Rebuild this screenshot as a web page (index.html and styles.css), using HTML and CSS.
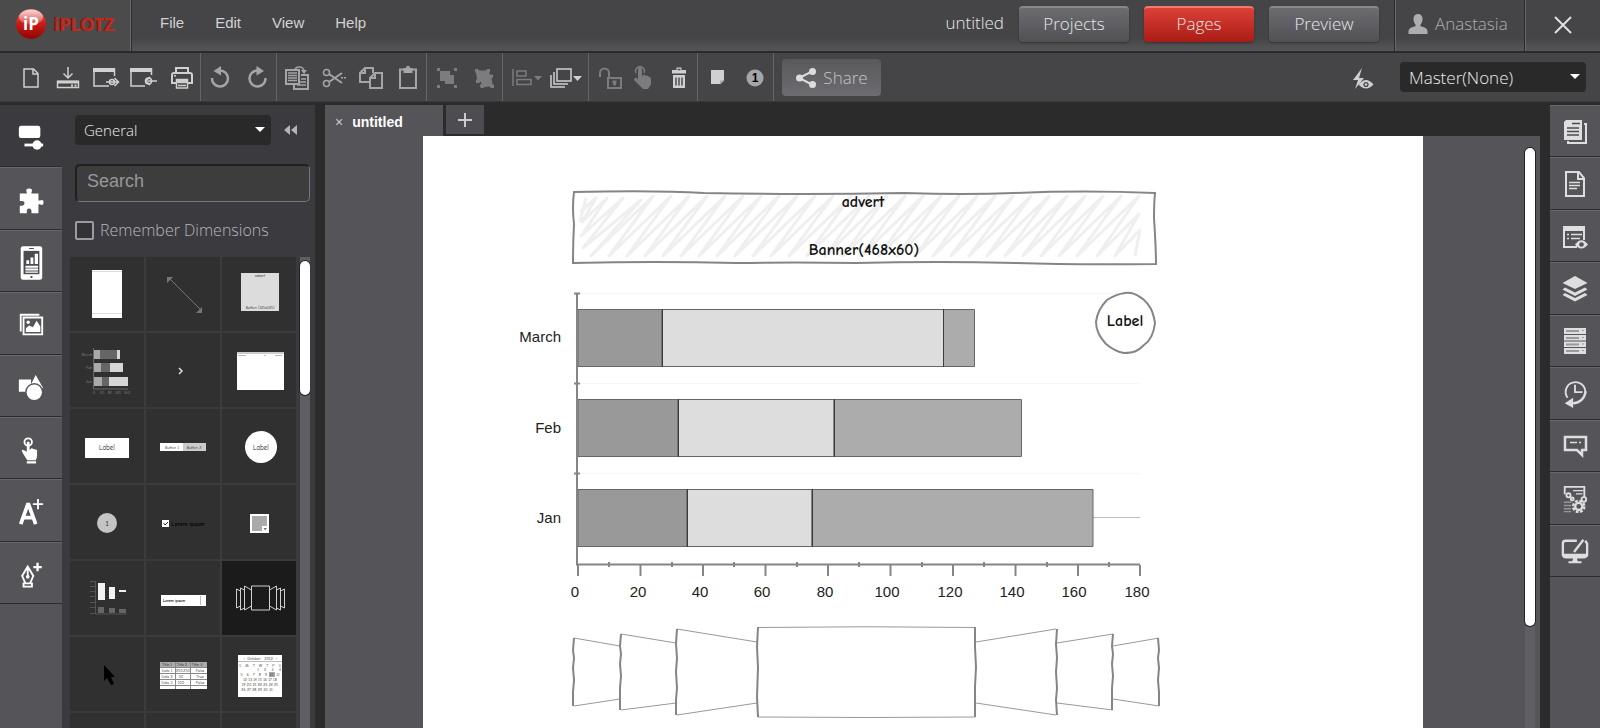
FILE: index.html
```html
<!DOCTYPE html>
<html lang="en">
<head>
<meta charset="utf-8">
<title>iPLOTZ - untitled</title>
<link rel="stylesheet" href="styles.css">
</head>
<body>
<div class="app">
  <header class="header">
    <div class="brand">
      <svg class="brand-mark" viewBox="0 0 32 32" aria-hidden="true">
        <defs>
          <linearGradient id="ball" x1="0" y1="0" x2="0" y2="1"><stop offset="0" stop-color="#e0605a"/><stop offset=".5" stop-color="#c91a14"/><stop offset="1" stop-color="#8e0503"/></linearGradient>
          <linearGradient id="shine" x1="0" y1="0" x2="0" y2="1"><stop offset="0" stop-color="#fff" stop-opacity=".75"/><stop offset="1" stop-color="#fff" stop-opacity=".15"/></linearGradient>
        </defs>
        <circle cx="16" cy="16" r="15" fill="url(#ball)"/>
        <ellipse cx="16" cy="9" rx="12" ry="7.500" fill="url(#shine)"/>
        <text x="16" y="22" text-anchor="middle" class="mark-text">iP</text>
      </svg>
      <span class="brand-name">iPLOTZ</span>
    </div>
    <nav class="menu">
      <button>File</button><button>Edit</button><button>View</button><button>Help</button>
    </nav>
    <span class="project-name">untitled</span>
    <div class="modes">
      <button class="mode">Projects</button>
      <button class="mode mode-on">Pages</button>
      <button class="mode">Preview</button>
    </div>
    <a class="user" href="#">
      <svg class="user-icon" viewBox="0 0 20 20" aria-hidden="true"><path d="M10 0c3 0 4.500 2 4.500 5 0 2.300-.8 4.500-2 5.500v1.700c3 .8 7 1.600 7 5.300V20H.500v-2.500c0-3.700 4-4.500 7-5.300v-1.700c-1.200-1-2-3.200-2-5.500C5.500 2 7 0 10 0z"/></svg>
      <span>Anastasia</span>
    </a>
    <button class="close" aria-label="Close"><svg viewBox="0 0 18 18"><path d="M1 1l16 16M17 1L1 17"/></svg></button>
  </header>

  <div class="toolbar">
    <div class="group group-file">
      <button aria-label="New page"><svg class="ico" viewBox="0 0 26 26"><path class="l" d="M7 4h9.500l4.500 4.500V22H7z"/><path class="l" d="M16 4v5h5"/></svg></button>
      <button aria-label="Save"><svg class="ico" viewBox="0 0 26 26"><path class="l" d="M13 2v11M8.500 8.500L13 13l4.500-4.500M2.500 16.500h21v6h-21z"/><path d="M2 15.500h22v3H2zM16 19.500h2v2h-2zM19.500 19.500h2v2h-2z"/></svg></button>
      <button aria-label="Export"><svg class="ico ico-wide" viewBox="0 0 30 26"><path class="l" d="M23.500 11V4H3v17h15"/><path d="M2 3h22v4H2z"/><path class="l" d="M15 17h12M23.500 13l4 4-4 4"/><circle class="l" cx="21" cy="17" r="2.500"/></svg></button>
      <button aria-label="Import"><svg class="ico ico-wide" viewBox="0 0 30 26"><path class="l" d="M22.500 10V4H2v17h14"/><path d="M1 3h22v4H1z"/><path class="l" d="M19 16h9M21 12l-4 4 4 4"/><circle class="l" cx="19.500" cy="16" r="3"/></svg></button>
      <button aria-label="Print"><svg class="ico" viewBox="0 0 26 26"><path class="l w2" d="M7 8V3h12v5M7 18H3v-8q0-2 2-2h16q2 0 2 2v8h-4"/><path class="l" d="M7.500 14.500h11V23h-11zM9 17.500h8M9 20.500h8"/><path d="M5 10h2v1.500H5zM8 15h10v3H8z"/></svg></button>
    </div>
    <div class="group dim">
      <button aria-label="Undo"><svg class="ico" viewBox="0 0 26 26"><path class="l w3" d="M4 13a8 8 0 1 0 8-7.500"/><path d="M13 1v9.500L5.500 6z"/></svg></button>
      <button aria-label="Redo"><svg class="ico" viewBox="0 0 26 26"><path class="l w3" d="M20.500 13a8 8 0 1 1-8-7.500"/><path d="M11.500 1v9.500L19 6z"/></svg></button>
    </div>
    <div class="group dim">
      <button aria-label="Duplicate page"><svg class="ico" viewBox="0 0 26 26"><path class="l w2" d="M2 5h13v14H2zM17 10h7v14H10v-4"/><path class="l" d="M4 8h9M4 10.500h9M4 13h9M4 15.500h9M17 14h5M16 17h6M13 20h9M11 4c2-3 8-3 9 2"/><path d="M17 5h6l-3 4z"/></svg></button>
      <button aria-label="Cut"><svg class="ico" viewBox="0 0 26 26"><circle class="l" cx="5.500" cy="7.500" r="3"/><circle class="l" cx="5.500" cy="18.500" r="3"/><path class="l w2" d="M8 9l13 9M8 17l13-9"/><path d="M20 12h2v1.500h-2zM23 12h2v1.500h-2z"/></svg></button>
      <button aria-label="Copy"><svg class="ico" viewBox="0 0 26 26"><path class="l w2" d="M12 17H2V8l5-5h8v5M7 3v5H2"/><path class="l w2" d="M17 8h7v15H12V13zM17 8v5h-5"/></svg></button>
      <button aria-label="Paste"><svg class="ico" viewBox="0 0 26 26"><path class="l w2" d="M5 4.500h16V23H5z"/><path d="M8.500 3h2.500c0-3 4-3 4 0h2.500v5h-9z"/></svg></button>
    </div>
    <div class="group off">
      <button aria-label="Group"><svg class="ico" viewBox="0 0 26 26"><path d="M6 6h10v4h4v9h-9v-3H6zM3 3h3v3H3zM20 3h3v3h-3zM3 20h3v3H3zM20 20h3v3h-3z"/></svg></button>
      <button aria-label="Ungroup"><svg class="ico" viewBox="0 0 26 26"><path d="M4 4h3l1 1.500h7l1-1.500h3v3l-1 1 1 1.500h3v3l-1.500 1 1 5.500 1.500 1v3h-3l-1.500-1.500-5 .5-1 1h-3l-.5-3 1.500-1.500-1-2-1 .5v1H5v-3l1-1-1-6-1-1z"/></svg></button>
    </div>
    <div class="group">
      <button class="drop off" aria-label="Align"><svg class="ico ico-drop" viewBox="0 0 34 26"><path class="l" d="M5 4v17M9 6h9v5H9zM9 14.500h14v5H9z"/><path d="M26 11h8l-4 4.500z"/></svg></button>
      <button class="drop" aria-label="Arrange"><svg class="ico ico-drop" viewBox="0 0 34 26"><path class="l" d="M7 4h14v12H7zM4 7v12h14M1 10v12h14"/><path d="M23 11h9l-4.500 5z"/></svg></button>
    </div>
    <div class="group group-edit">
      <button class="off" aria-label="Unlock"><svg class="ico" viewBox="0 0 26 26"><path class="l w2" d="M3 12V8a4.500 4.500 0 0 1 9 0v5M11 13h13v10H11z"/><path d="M15.500 15.500h4v2l-1 3h-2l-1-3z"/></svg></button>
      <button class="off" aria-label="Interaction"><svg class="ico" viewBox="0 0 26 26"><path d="M6 3q2-2 4 0v9l1-2q2-1 3 1 2-1 3 1 2 0 2 2v5l-3 5h-5L2 15q0-3 3-2l1 2z"/><path class="l" d="M4 8a4.500 4.500 0 1 1 8 0"/></svg></button>
      <button aria-label="Delete"><svg class="ico" viewBox="0 0 26 26"><path d="M5 5h4.500V2.500h5V5H19v3.500H5zM6 10h12v13H6z"/><path class="k" d="M9 12.500v8M12 12.500v8M15 12.500v8M10.500 4.500h3"/></svg></button>
    </div>
    <div class="group">
      <button aria-label="Add note"><svg class="ico" viewBox="0 0 26 26"><path d="M6 5h13v10l-4 4H6z"/><path d="M15 19.500V15.500h4.500z" fill="#aaa"/></svg></button>
      <button aria-label="Add marker"><svg class="ico" viewBox="0 0 26 26"><circle cx="13" cy="13" r="8.500" fill="#a5a5a7"/><text x="13" y="17" text-anchor="middle" class="pin-text">1</text></svg></button>
    </div>
    <button class="share"><svg class="share-icon" viewBox="0 0 22 22" aria-hidden="true"><path class="l w2" d="M18 4L4 11l14 7"/><circle cx="4.500" cy="11" r="3.500"/><circle cx="17.500" cy="4.500" r="3.500"/><circle cx="17.500" cy="17.500" r="3.500"/></svg><span>Share</span></button>
    <button class="flash" aria-label="Toggle interactions"><svg class="ico" viewBox="0 0 26 26"><path d="M12 2L3 14h5L5 23l9-11H9z"/><path d="M8.500 18.500q7.500-9 15 0-7.500 8-15 0z"/><circle cx="16" cy="18.500" r="2.600" fill="#4a4a4c"/><circle cx="16" cy="18.500" r="1.200"/></svg></button>
    <div class="pick pick-master">
      <select aria-label="Master"><option>Master(None)</option></select>
    </div>
  </div>

  <div class="work">
    <div class="rail">
      <nav class="rail-left" aria-label="Libraries">
        <button class="on" aria-label="Widgets"><svg viewBox="0 0 30 30"><rect x="2" y="2" width="23" height="13" rx="2.500"/><path d="M8 21h10v3H8z"/><ellipse cx="21.500" cy="22.500" rx="5" ry="5"/><path d="M24 21h4v3h-4z"/></svg></button>
        <button aria-label="Plugins"><svg viewBox="0 0 30 30"><path d="M3 7h7.500V6Q8.500 1.500 13 1.500T15.500 6v1H23v7.500h1.500q4-2 4 2t-4 2H23V28h-7.500v-2q0-3-2.500-3t-2.500 3v2H3v-8h2q3 0 3-2.500T5 15H3z"/></svg></button>
        <button aria-label="Mobile"><svg viewBox="0 0 30 38"><rect x="4" y="1" width="23" height="36" rx="2.500"/><path d="M7 6h17v25H7z" fill="#4c4b50"/><path d="M10 16h3v4h-3zM14.500 13h3v7h-3zM19 9h3.500v11H19zM9 22h13.500v2H9zM9 25h13.500v2H9zM9 28h13.500v1.500H9z"/><path d="M13 3h5v1h-5zM14.500 33h2v2h-2z" fill="#4c4b50"/></svg></button>
        <button aria-label="Images"><svg viewBox="0 0 30 30"><path d="M4 22V4h20M7 7h20v18H7z" class="l w2"/><path d="M9.500 22.500v-4l3.500-3 4 2 4-7 4 6v6z"/><circle cx="12" cy="12" r="1.800"/></svg></button>
        <button aria-label="Shapes"><svg viewBox="0 0 30 30"><path d="M2 6h13v13H2zM20 1l8 14H13z"/><circle cx="18.500" cy="19.500" r="9" stroke="#555458" stroke-width="1.500"/></svg></button>
        <button aria-label="Gestures"><svg viewBox="0 0 30 30"><circle class="l w2" cx="12" cy="6.500" r="4"/><path d="M10.500 7q1.500-2 3 0v8l2-2 6 2v6q0 3-1.500 5H11l-5-8q-2-4 1-3l3.500 2zM10.500 27h10v2.500h-10z"/></svg></button>
        <button aria-label="Text"><svg viewBox="0 0 30 30"><path class="l w4" d="M4 28L11.500 7h1L20 28M7 21h10"/><path class="l w2" d="M22.500 1v11M17 6.500h11"/></svg></button>
        <button aria-label="Draw"><svg viewBox="0 0 30 30"><path class="l w2" d="M11.500 6l-6 10 3.500 8h5l3.500-8zM11.500 6v10M7 24h9v3.500H7z"/><circle cx="11.500" cy="17" r="2"/><path class="l w3" d="M22 2v9M17.500 6.500h9"/></svg></button>
      </nav>
    </div>

    <aside class="panel">
      <div class="panel-top">
        <div class="pick pick-category"><select aria-label="Category"><option>General</option></select></div>
        <button class="collapse" aria-label="Collapse"><svg viewBox="0 0 13 10"><path d="M6 0v10L0 5zM13 0v10L7 5z"/></svg></button>
      </div>
      <input class="search" type="text" placeholder="Search" aria-label="Search">
      <label class="remember"><input type="checkbox"> <span>Remember Dimensions</span></label>
      <div class="shelf">
        <div class="tiles">
          <button aria-label="Mobile page"><svg viewBox="0 0 74 74"><path fill="#fff" d="M22 13h30v48H22z"/><path stroke="#ddd" d="M22 14.500h30M22 56.500h30"/></svg></button>
          <button aria-label="Arrow"><svg viewBox="0 0 74 74"><path stroke="#777" d="M24 22l32 32"/><path fill="#777" d="M21 20h6l-6 6zM56 50v6h-6z"/></svg></button>
          <button aria-label="Button banner"><svg viewBox="0 0 74 74"><path fill="#dcdcdc" d="M19 16h38v38H19z"/><text x="38" y="20" class="t4">advert</text><text x="38" y="52" class="t4">Button (125x125)</text></svg></button>
          <button aria-label="Bar chart"><svg viewBox="0 0 74 74"><path stroke="#666" fill="none" d="M23.500 15v41H58"/><path fill="#aaa" d="M24 17h6v9h-6zM24 30h7v9h-7zM24 44h8v9h-8z"/><path fill="#666" d="M30 17h17v9H30zM31 30h9v9h-9zM32 44h7v9h-7z"/><path fill="#d6d6d6" d="M47 17h3v9h-3zM40 30h13v9H40zM39 44h19v9H39z"/><g class="faint"><text x="17" y="23" class="t4">March</text><text x="19" y="36" class="t4">Feb</text><text x="19" y="50" class="t4">Jan</text><text x="24" y="61" class="t4">0</text><text x="32" y="61" class="t4">40</text><text x="40" y="61" class="t4">80</text><text x="48" y="61" class="t4">120</text><text x="57" y="61" class="t4">160</text></g></svg></button>
          <button aria-label="Breadcrumb"><svg viewBox="0 0 74 74"><path stroke="#ddd" stroke-width="1.500" fill="none" d="M33 35l3 3-3 3"/></svg></button>
          <button aria-label="Browser"><svg viewBox="0 0 74 74"><path fill="#fff" d="M15 19h47v38H15z"/><path fill="#ccc" d="M15 19h47v2H15z"/><path stroke="#bbb" stroke-dasharray="8 18 2 9" d="M16 22.500h44"/></svg></button>
          <button aria-label="Button"><svg viewBox="0 0 74 74"><path fill="#fff" d="M15 29h44v20H15z"/><text x="37" y="41" class="t7">Label</text></svg></button>
          <button aria-label="Button bar"><svg viewBox="0 0 74 74"><path fill="#fff" d="M14 34h23v8H14z"/><path fill="#ccc" d="M37 34h23v8H37z"/><text x="26" y="40" class="t4">Button 1</text><text x="48" y="40" class="t4">Button 2</text></svg></button>
          <button aria-label="Round button"><svg viewBox="0 0 74 74"><circle cx="39" cy="38" r="16" fill="#fff"/><text x="39" y="41" class="t7">Label</text></svg></button>
          <button aria-label="Callout"><svg viewBox="0 0 74 74"><circle cx="37" cy="38" r="10" fill="#c4c4c4"/><text x="37" y="41" class="t8">1</text></svg></button>
          <button aria-label="Check box"><svg viewBox="0 0 74 74"><path fill="#fff" d="M16 35h7v7h-7z"/><path stroke="#333" fill="none" d="M17.500 38l1.500 2 3-3"/><text x="42" y="41" class="t6 ink">Lorem ipsum</text></svg></button>
          <button aria-label="Color picker"><svg viewBox="0 0 74 74"><path fill="#aaa" stroke="#fff" stroke-width="2" d="M29 30h17v17H29z"/><path fill="#fff" d="M40 41h6v6h-6z"/><path fill="#777" d="M41.500 43h3.500l-2 2.500z"/></svg></button>
          <button aria-label="Column chart"><svg viewBox="0 0 74 74"><path stroke="#555" fill="none" d="M25.500 20v33H57M20 20.500h5M20 25.500h5M20 30.500h5M20 35.500h5M20 41.500h5M20 46.500h5M20 52.500h5"/><path fill="#f2f2f2" d="M28 22h7v17h-7zM39 26h6v12h-6zM49 29h7v2h-7z"/><path fill="#666" d="M28 46h6v6h-6zM39 47h6v5h-6zM49 48h7v4h-7z"/></svg></button>
          <button aria-label="Combo box"><svg viewBox="0 0 74 74"><path fill="#fff" d="M15 34h45v11H15z"/><path stroke="#bbb" d="M54.500 35v9"/><text x="28" y="41" class="t4 ink">Lorem ipsum</text></svg></button>
          <button class="picked" aria-label="Cover flow"><svg viewBox="0 0 74 74"><path stroke="#d0d0d0" fill="none" d="M29.500 25h18v24h-18zM29.500 29l-7-4v24l7-4M22.500 29l-4-2v22l4-2M18.500 30l-4-2v19l4-2M47.500 29l7-4v24l-7-4M54.500 29l4-2v22l-4-2M58.500 30l4-2v19l-4-2"/></svg></button>
          <button aria-label="Cursor"><svg viewBox="0 0 74 74"><path d="M34 28v16l3-3 4 7 3-1-3-7h4z"/></svg></button>
          <button aria-label="Data grid"><svg viewBox="0 0 74 74"><path fill="#fff" d="M14 25h47v27H14z"/><path fill="#aaa" d="M14 25h47v5H14z"/><path stroke="#888" d="M14 30.500h47M14 36.500h47M14 42.500h47M14 48.500h47M29.500 25v27M44.500 25v27"/><text x="21" y="29" class="t4">Title 1</text><text x="36" y="29" class="t4">Title 2</text><text x="51" y="29" class="t4">Title 3</text><text x="21" y="35" class="t4">Data 1</text><text x="37" y="35" class="t4">250,250</text><text x="54" y="35" class="t4">False</text><text x="21" y="41" class="t4">Data 2</text><text x="35" y="41" class="t4">50</text><text x="54" y="41" class="t4">True</text><text x="21" y="47" class="t4">Data 3</text><text x="35" y="47" class="t4">100</text><text x="54" y="47" class="t4">False</text></svg></button>
          <button aria-label="Calendar"><svg viewBox="0 0 74 74"><path fill="#fff" d="M16 18h44v42H16z"/><path stroke="#bbb" d="M16 24.500h44"/><path fill="#aaa" d="M47 35h6v5h-6z"/><text x="38" y="23" class="t4">‹  October   2012  ›</text><text x="38" y="30" class="t4">S   M   T   W   T   F   S</text><text x="47" y="34" class="t4">1    2    3    4</text><text x="38" y="39" class="t4">5   6   7   8   9  10  11</text><text x="38" y="44" class="t4">12 13 14 15 16 17 18</text><text x="38" y="49" class="t4">19 20 21 22 23 24 25</text><text x="35" y="54" class="t4">26 27 28 29 30 31</text></svg></button>
          <button aria-label="Date field"></button><button aria-label="Divider"></button><button aria-label="Form"></button>
        </div>
        <div class="track"><div class="thumb thumb-panel"></div></div>
      </div>
    </aside>

    <main class="editor">
      <div class="tabs">
        <div class="tab"><button class="tab-x" aria-label="Close tab">×</button><span>untitled</span></div>
        <button class="tab-add" aria-label="Add tab"><svg viewBox="0 0 16 16"><path d="M8 1v14M1 8h14"/></svg></button>
      </div>
      <div class="canvas">
        <div class="page">
          <svg class="item banner" viewBox="568 186 594 84">
            <path class="hatch" d="M580 222l6-24M580 212l16-14l-14 24l25-24l-26 38l42-38l-40 50l58-48l-50 56l62-60l-44 60l62-60l-44 60l62-60l-44 60l62-60l-44 60l62-60l-44 60l62-60l-44 60l62-60l-44 60l62-60l-44 60l62-60l-44 60l62-60l-44 60l62-60l-44 60l62-60l-44 60l62-60l-44 60l62-60l-44 60l62-60l-44 60l62-60l-44 60l62-60l-44 60l62-60l-44 60l62-60l-44 60l62-60l-44 60l62-60l-44 60l62-60l-44 60l62-60l-44 60l62-60l-44 60l62-60l-44 60l62-60l-44 60l62-60l-44 60l62-60l-42 60l42-42l-24 42l25-26l-5 26"/>
            <path class="sketch" d="M574 192q80-2 130 1 100 2 200 0 60 2 110 0 70-3 141 0-1 10-1 25 2 30 2 46-80 1-140-1-80-2-160 0-60-1-120 0-80-2-163 0 0-20 1-39-2-16 0-32z"/>
            <text x="863" y="207" class="note">advert</text>
            <text x="864" y="255" class="note">Banner(468x60)</text>
          </svg>
          <svg class="item chart" viewBox="508 280 660 330">
            <path class="gridline" d="M577 293.500h563M577 383.500h563M577 473.500h563"/>
            <path stroke="#b9bfc0" stroke-width="1" d="M1092 517.500h48"/>
            <g class="bar">
              <path fill="#999" d="M578 309.500h84v57h-84zM578 399.500h100v57H578zM578 489.500h109v57H578z"/>
              <path fill="#ddd" d="M662 309.500h282v57H662zM678 399.500h156v57H678zM687 489.500h125v57H687z"/>
              <path fill="#acacac" d="M943.500 309.500h31v57h-31zM834 399.500h187.500v57H834zM812 489.500h281v57H812z"/>
            </g>
            <path stroke="#3c3c3c" d="M662.500 309v58M943.500 309v58M678.500 399v58M834.500 399v58M687.500 489v58M812.500 489v58"/>
            <path class="axis" d="M577 293v271.500h563M574 293.500h6M574 383.500h6M574 473.500h6M578 565v11M640.500 565v11M703 565v11M765.500 565v11M828 565v11M890.500 565v11M953 565v11M1015.500 565v11M1078 565v11M1140 565v11"/>
            <path class="axis" d="M609 562v5M672 562v5M734 562v5M797 562v5M859 562v5M922 562v5M984 562v5M1047 562v5M1109 562v5"/>
            <g class="axis-text" text-anchor="end"><text x="561" y="342">March</text><text x="561" y="433">Feb</text><text x="561" y="523">Jan</text></g>
            <g class="axis-text" text-anchor="middle"><text x="575" y="597">0</text><text x="638" y="597">20</text><text x="700" y="597">40</text><text x="762" y="597">60</text><text x="825" y="597">80</text><text x="887" y="597">100</text><text x="950" y="597">120</text><text x="1012" y="597">140</text><text x="1074" y="597">160</text><text x="1137" y="597">180</text></g>
          </svg>
          <svg class="item bubble" viewBox="1090 287 70 70">
            <path class="sketch" d="M1125 293c9-1 13 3 18 6 7 6 10 12 12 24-1 9-4 17-11 22-6 6-10 8-20 8-7-1-12-4-18-9-6-7-10-13-10-22 1-8 4-15 11-22 6-4 10-6 18-7z"/>
            <text x="1125" y="326" class="note">Label</text>
          </svg>
          <svg class="item flow" viewBox="568 622 596 100">
            <path class="edge" d="M574 638l46 8M574 706l46-7M621 634l55 9M621 710l55-7M677 629l80 13M677 715l80-12M758 627.500q110-1.500 217 0M758 717q110 1 217 0M976 642l80-13M976 703l80 12M1057 643l56-9M1057 703l56 7M1113 646l46-8M1113 699l46 7"/>
            <path class="side" d="M574 638l-1 12 1 8-1 10 1 12-1 12 0 14M621 634l-1 12 1 8-1 10 1 12-1 12 0 22M677 629l-1 15 1 14-1 14 1 16-1 12 0 15M758 627l-1 20 1 20-1 30 1 20M975 627v20l1 20-1 20v30M1057 629l-1 15 1 14-1 14 1 16-1 12 1 15M1113 634l-1 12 1 8-1 10 1 12-1 12 0 22M1158 638l1 12-1 8 1 10-1 12 1 12 0 14"/>
          </svg>
        </div>
        <div class="track track-canvas"><div class="thumb thumb-canvas"></div></div>
      </div>
    </main>

    <div class="rail">
      <nav class="rail-right" aria-label="Inspectors">
        <button aria-label="Pages"><svg viewBox="0 0 28 28"><path d="M5 2h16v20H3V4z"/><path class="l w2" d="M23 6h2v19H7v-2"/><path class="k" d="M11 5.500h8M6 10h12M6 13.500h12M6 17h12"/></svg></button>
        <button aria-label="Page properties"><svg viewBox="0 0 28 28"><path class="l w2" d="M5 2h13l5 6v18H5zM17 2v7h6"/><path class="l" d="M8 12.500h11M8 15.500h11M8 18.500h8"/></svg></button>
        <button aria-label="Properties"><svg viewBox="0 0 28 28"><path class="l w2" d="M16 24H3V4h20v13"/><path d="M2 3h22v5H2z"/><path class="l" d="M6 11.500h2M10 11.500h11M6 15.500h2M10 15.500h9"/><path d="M14 21.500q6.500-8.500 13 0-6.500 8-13 0z"/><circle cx="20.500" cy="21.500" r="2.300" fill="#555458"/></svg></button>
        <button aria-label="Layers"><svg viewBox="0 0 28 28"><path d="M14 1l12.500 7L14 14 1.500 8z"/><path d="M4 12.500l10 5 10-5 2.500 2L14 21 1.500 14.500zM4 18l10 5 10-5 2.500 2L14 26.500 1.500 20z"/></svg></button>
        <button aria-label="Masters"><svg viewBox="0 0 28 28"><path d="M3 1h22v6H3zM3 8h22v5.500H3zM3 14.500h22v5.500H3zM3 21h22v6H3z"/><path class="slot" d="M5 3h13v2H5zM5 10h13v2H5zM5 16.500h13v2H5zM5 23h13v2H5zM21 3h2v1h-2zM21 10h2v1h-2zM21 16.500h2v1h-2zM21 23h2v1h-2z"/></svg></button>
        <button aria-label="History"><svg viewBox="0 0 28 30"><path class="l w2" d="M6 19a10.500 10.500 0 1 1 19-6"/><path class="l w2" d="M14 5v8h8"/><path class="l w3" d="M25.500 12q-2 12-14 13"/><path d="M12 19v11l-9-5z"/></svg></button>
        <button aria-label="Comments"><svg viewBox="0 0 28 28"><path class="l w3" d="M4 5h21v13h-4v5l-5-5H4z"/><path class="l" d="M9 10.500h7M18 10.500h2"/></svg></button>
        <button aria-label="Settings"><svg viewBox="0 0 28 30"><path class="l w2" d="M3 10V2h21v11"/><path class="l" d="M12 6h11M15 9.500h7"/><path class="l faded" d="M2 18.500h8M2 22h8M2 25.500h8M2 28.500h8"/><circle class="l w2" cx="7" cy="11" r="2.200"/><circle class="l w2" cx="11" cy="15" r="1.600"/><circle class="l w3" cx="18" cy="23" r="3.800"/><circle class="l w3" cx="18" cy="23" r="6" stroke-dasharray="3 1.700"/><circle class="l w2" cx="23.500" cy="15.500" r="2.500"/></svg></button>
        <button aria-label="Design mode"><svg viewBox="0 0 30 28"><path class="l w3" d="M17 3H5q-3 0-3 3v12q0 2 3 2h20q3 0 3-2V6l-2-3"/><path d="M2 17h26v3q-1 2-3 2h-8l1 3h4v2H8v-2h4l1-3H5q-3 0-3-2z"/><path class="l w3" d="M14 15L24 2"/></svg></button>
      </nav>
    </div>
  </div>
</div>
</body>
</html>
```
FILE: styles.css
```css
* { box-sizing: border-box; }
body { margin: 0; font-family: "Open Sans", "Noto Sans", sans-serif; font-size: 16px; font-weight: 300; color: #e8e8e8; background: #2b2b2c; }
button, input, select { font: inherit; color: inherit; margin: 0; }
button { border: 0; padding: 0; background: none; cursor: pointer; display: flex; align-items: center; justify-content: center; }
a { color: inherit; text-decoration: none; }
svg { display: block; fill: currentColor; }

.app { height: 100vh; display: flex; flex-direction: column; overflow: hidden; }

/* strokes shared by icons */
.l { fill: none; stroke: currentColor; stroke-width: 1.5; }
.w2 { stroke-width: 2; }
.w3 { stroke-width: 2.5; }
.w4 { stroke-width: 4; }
.k { fill: none; stroke: #4c4b50; stroke-width: 1.5; }
.slot { fill: #9a9a9d; }
.faded { stroke: #97979a; }

/* header */
.header { flex: none; height: 53px; display: flex; align-items: stretch; background: linear-gradient(#454547 75%, #565658); border-bottom: 2px solid #2a2a2b; }
.brand { width: 131px; display: flex; align-items: center; gap: 7px; padding: 0 0 3px 15px; border-right: 1px solid #69696b; box-shadow: 1px 0 0 #2f2f31; background: #4b4b4b; }
.brand-mark { width: 32px; height: 32px; }
.mark-text { font-size: 17px; font-weight: 700; fill: #fff; }
.brand-name { font-family: "Noto Sans", sans-serif; font-size: 18px; font-weight: 700; color: #c3281d; text-shadow: -1px 0 0 #6b1712; }
.menu { display: flex; gap: 31px; padding: 0 0 6px 29px; flex: 1; font-family: "Liberation Sans", Arial, sans-serif; font-size: 15px; font-weight: 400; color: #d2d2d2; }
.project-name { display: flex; align-items: center; padding: 0 15px 6px 0; font-size: 17px; }
.modes { display: flex; gap: 15px; padding: 6px 15px 9px 0; }
.mode { width: 110px; padding-bottom: 4px; border-radius: 4px; background: linear-gradient(#6c6c70, #515155); border-top: 2px solid #88888b; font-size: 17px; box-shadow: 0 1px 2px #333; }
.mode-on { background: linear-gradient(#dc4038, #a91c14); border-top-color: #ee7a72; }
.user { width: 131px; display: flex; align-items: center; gap: 7px; padding: 0 0 4px 13px; border-left: 1px solid #2c2c2e; border-right: 1px solid #2c2c2e; box-shadow: inset 1px 0 0 #666; color: #adadaf; font-size: 17px; }
.user-icon { width: 20px; height: 20px; }
.close { width: 75px; padding-bottom: 2px; box-shadow: inset 1px 0 0 #666; }
.close svg { width: 18px; height: 18px; stroke: #e0e0e0; stroke-width: 2; }

/* toolbar */
.toolbar { flex: none; height: 49px; display: flex; align-items: stretch; background: #454446; border-bottom: 1px solid #3b3b3c; color: #d0d0d0; }
.group { display: flex; border-right: 1px solid #646466; padding: 2px 0 0 1px; }
.group button { width: 37px; }
.group-file { padding-left: 11px; gap: 1px; }
.group-edit { padding-left: 3px; }
.group-edit button { width: 35px; }
.group .drop { width: 42px; }
.dim { color: #a5a5a7; }
.group.off, .group .off { color: #7c7c7f; }
.ico { width: 26px; height: 26px; }
.ico-wide { width: 30px; }
.ico-drop { width: 34px; }
.pin-text { font: 700 12px "Liberation Sans", sans-serif; fill: #000; }
.share { width: 99px; gap: 6px; margin: 6px 0 5px 8px; border-radius: 4px; background: linear-gradient(#59595c, #6d6d71); color: #c4c4c6; font-size: 17px; }
.share-icon { width: 22px; height: 22px; color: #dcdcdc; }
.flash { margin-left: auto; width: 37px; padding-top: 3px; }
.pick { position: relative; flex: none; display: flex; }
.pick select { appearance: none; width: 100%; height: 30px; padding: 0 24px 0 9px; border: 0; border-radius: 4px; background: #29292a; color: #eee; }
.pick::after { content: ""; position: absolute; right: 6px; top: 50%; margin-top: -3px; border: 5px solid transparent; border-top-color: #fff; border-bottom: 0; pointer-events: none; }
.pick-master { width: 186px; margin: 0 14px 0 19px; align-items: center; font-size: 17px; }

/* work area */
.work { flex: 1; min-height: 0; display: flex; padding-top: 3px; }
.rail { flex: none; background: #555458; color: #fff; }
.rail nav { display: grid; grid-auto-rows: 1fr; }
.rail button { width: 100%; border-bottom: 1px solid #2c2c2e; box-shadow: inset 0 1px 0 #68676b; }
.rail .rail-left { width: 62px; height: 499px; }
.rail-left button { padding-top: 5px; }
.rail-left svg { width: 28px; height: 36px; }
.rail-left .on { background: #3b3a3e; box-shadow: none; }
.rail .rail-right { width: 50px; height: 472px; color: #dedee0; }
.rail-right button { padding-top: 2px; }
.rail-right svg { width: 28px; height: 28px; }

.panel { flex: none; width: 253px; display: flex; flex-direction: column; background: #3b3a3e; padding: 10px 5px 0 8px; }
.panel-top { display: flex; align-items: center; padding-left: 5px; }
.pick-category { width: 196px; font-size: 15px; }
.collapse { width: 43px; }
.collapse svg { width: 13px; height: 10px; color: #b4b4b6; }
.search { height: 38px; margin: 19px 0 0 5px; padding: 0 10px 4px; border: 1px solid #77777a; border-top: 2px solid #1f1f20; border-left: 2px solid #1f1f20; border-radius: 5px; background: #3d3d3e; font-family: "Liberation Sans", Arial, sans-serif; font-size: 18px; font-weight: 400; }
.search::placeholder { color: #98989a; opacity: 1; }
.remember { display: flex; align-items: center; gap: 6px; height: 24px; margin: 16px 0 15px 5px; color: #b8b8ba; font-size: 16px; }
.remember input { appearance: none; width: 19px; height: 19px; border: 2px solid #9c9c9e; border-radius: 2px; background: #333335; }
.shelf { flex: 1; min-height: 0; display: flex; gap: 4px; overflow: hidden; }
.tiles { display: grid; grid-template-columns: repeat(3, 74px); grid-auto-rows: 74px; gap: 2px; align-content: start; }
.tiles button { background: #303031; color: #000; }
.tiles .picked { background: #1b1b1c; }
.tiles svg { width: 74px; height: 74px; }
.t4, .t6, .t7, .t8 { font-family: "Comic Neue", "Comic Sans MS", Lato, sans-serif; font-weight: 400; text-anchor: middle; fill: #222; white-space: pre; }
.t4 { font-size: 4px; }
.t6 { font-size: 6px; }
.t7 { font-size: 7px; }
.t8 { font-size: 8px; }
.ink { fill: #000; font-weight: 700; }
.faint text { fill: #888; }
.track { flex: none; width: 10px; background: #5f5e62; }
.thumb { background: #fff; border-radius: 5px; box-shadow: 0 0 0 1px #222; }
.thumb-panel { height: 134px; margin-top: 4px; }

.editor { flex: 1; min-width: 0; display: flex; flex-direction: column; padding: 0 10px; }
.tabs { flex: none; height: 31px; display: flex; gap: 3px; }
.tab { width: 118px; display: flex; align-items: center; gap: 9px; padding: 2px 10px 0; background: #555458; font: 700 14px "Liberation Sans", Arial, sans-serif; color: #fff; }
.tab-x { font-size: 14px; font-weight: 400; color: #ccc; }
.tab-add { width: 38px; height: 29px; background: #4d4c50; }
.tab-add svg { width: 16px; height: 16px; stroke: #ccc; stroke-width: 2; }
.canvas { flex: 1; min-height: 0; display: flex; background: #555458; overflow: hidden; }
.page { position: relative; flex: 1; margin: 0 102px 0 98px; background: #fff; }
.track-canvas { margin: 12px 5px 0 0; }
.thumb-canvas { height: 478px; }

/* widgets placed freely on the page */
.item { position: absolute; }
.banner { left: 145px; top: 50px; width: 594px; height: 84px; }
.chart { left: 85px; top: 144px; width: 660px; height: 330px; }
.bubble { left: 667px; top: 151px; width: 70px; height: 70px; }
.flow { left: 145px; top: 486px; width: 596px; height: 100px; }
.sketch { fill: none; stroke: #858585; stroke-width: 2; }
.bubble .sketch { fill: #fff; }
.hatch { fill: none; stroke: #efefef; stroke-width: 3; stroke-linejoin: round; }
.note { font-family: "Comic Neue", "Comic Sans MS", Lato, sans-serif; font-size: 16px; font-weight: 700; text-anchor: middle; fill: #111; }
.gridline { stroke: #f6f6f6; }
.bar { stroke: #666; }
.axis { fill: none; stroke: #858585; stroke-width: 2; }
.axis-text { font-family: "Liberation Sans", Arial, sans-serif; font-size: 15px; font-weight: 400; fill: #222; }
.edge { fill: none; stroke: #999; }
.side { fill: none; stroke: #858585; stroke-width: 2; }
```
